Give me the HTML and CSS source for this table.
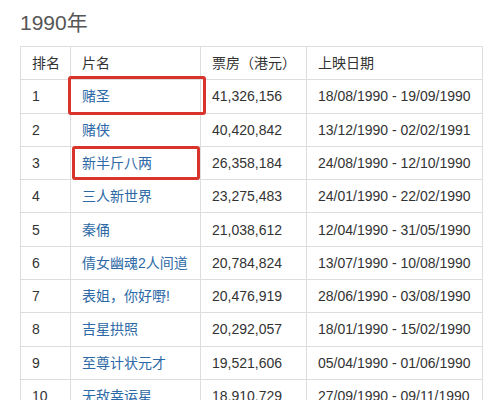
FILE: index.html
```html
<!DOCTYPE html>
<html>
<head>
    <meta charset="utf-8">
    <title>1990年</title>
    <link rel="stylesheet" href="styles.css">
</head>
<body>
    <h2 class="year-title">1990年</h2>

    <div class="table-wrap">
        <table class="box-table">
            <thead>
                <tr>
                    <th class="col-rank">排名</th>
                    <th class="col-name">片名</th>
                    <th class="col-gross">票房（港元）</th>
                    <th class="col-date">上映日期</th>
                </tr>
            </thead>
            <tbody>
                <tr><td>1</td><td><a href="#">赌圣</a></td><td>41,326,156</td><td>18/08/1990 - 19/09/1990</td></tr>
                <tr><td>2</td><td><a href="#">赌侠</a></td><td>40,420,842</td><td>13/12/1990 - 02/02/1991</td></tr>
                <tr><td>3</td><td><a href="#">新半斤八两</a></td><td>26,358,184</td><td>24/08/1990 - 12/10/1990</td></tr>
                <tr><td>4</td><td><a href="#">三人新世界</a></td><td>23,275,483</td><td>24/01/1990 - 22/02/1990</td></tr>
                <tr><td>5</td><td><a href="#">秦俑</a></td><td>21,038,612</td><td>12/04/1990 - 31/05/1990</td></tr>
                <tr><td>6</td><td><a href="#">倩女幽魂2人间道</a></td><td>20,784,824</td><td>13/07/1990 - 10/08/1990</td></tr>
                <tr><td>7</td><td><a href="#">表姐，你好嘢!</a></td><td>20,476,919</td><td>28/06/1990 - 03/08/1990</td></tr>
                <tr><td>8</td><td><a href="#">吉星拱照</a></td><td>20,292,057</td><td>18/01/1990 - 15/02/1990</td></tr>
                <tr><td>9</td><td><a href="#">至尊计状元才</a></td><td>19,521,606</td><td>05/04/1990 - 01/06/1990</td></tr>
                <tr><td>10</td><td><a href="#">无敌幸运星</a></td><td>18,910,729</td><td>27/09/1990 - 09/11/1990</td></tr>
            </tbody>
        </table>

        <!-- red highlight marks drawn over the table -->
        <div class="mark mark-one"></div>
        <div class="mark mark-two"></div>
    </div>
</body>
</html>
```

FILE: styles.css
```css
body {
    margin: 0;
    padding: 0 20px;
    font-family: "Liberation Sans", "Noto Sans CJK SC", Arial, sans-serif;
    font-size: 14px;
    color: #333;
    background: #fff;
}

.year-title {
    margin: 0;
    padding-top: 11px;
    height: 46px;
    box-sizing: border-box;
    font-size: 21px;
    font-weight: normal;
    line-height: 24px;
    color: #555;
}

.table-wrap {
    position: relative;
    width: 462px;
}

.box-table {
    width: 462px;
    border-collapse: collapse;
    table-layout: fixed;
}

.box-table th,
.box-table td {
    box-sizing: border-box;
    border: 1px solid #ddd;
    padding: 6.15px 11px;
    line-height: 20px;
    text-align: left;
    font-weight: normal;
    white-space: nowrap;
    overflow: hidden;
}

.col-rank { width: 50px; }
.col-name { width: 130px; }
.col-gross { width: 106px; }
.col-date { width: 176px; }

.box-table a {
    color: #2d69a6;
    text-decoration: none;
}

.mark {
    position: absolute;
    border: 3px solid #d8342c;
    border-radius: 3px;
    box-sizing: border-box;
}

.mark-one {
    left: 48px;
    top: 30px;
    width: 138px;
    height: 39px;
}

.mark-two {
    left: 52px;
    top: 100px;
    width: 128px;
    height: 34px;
}
```
